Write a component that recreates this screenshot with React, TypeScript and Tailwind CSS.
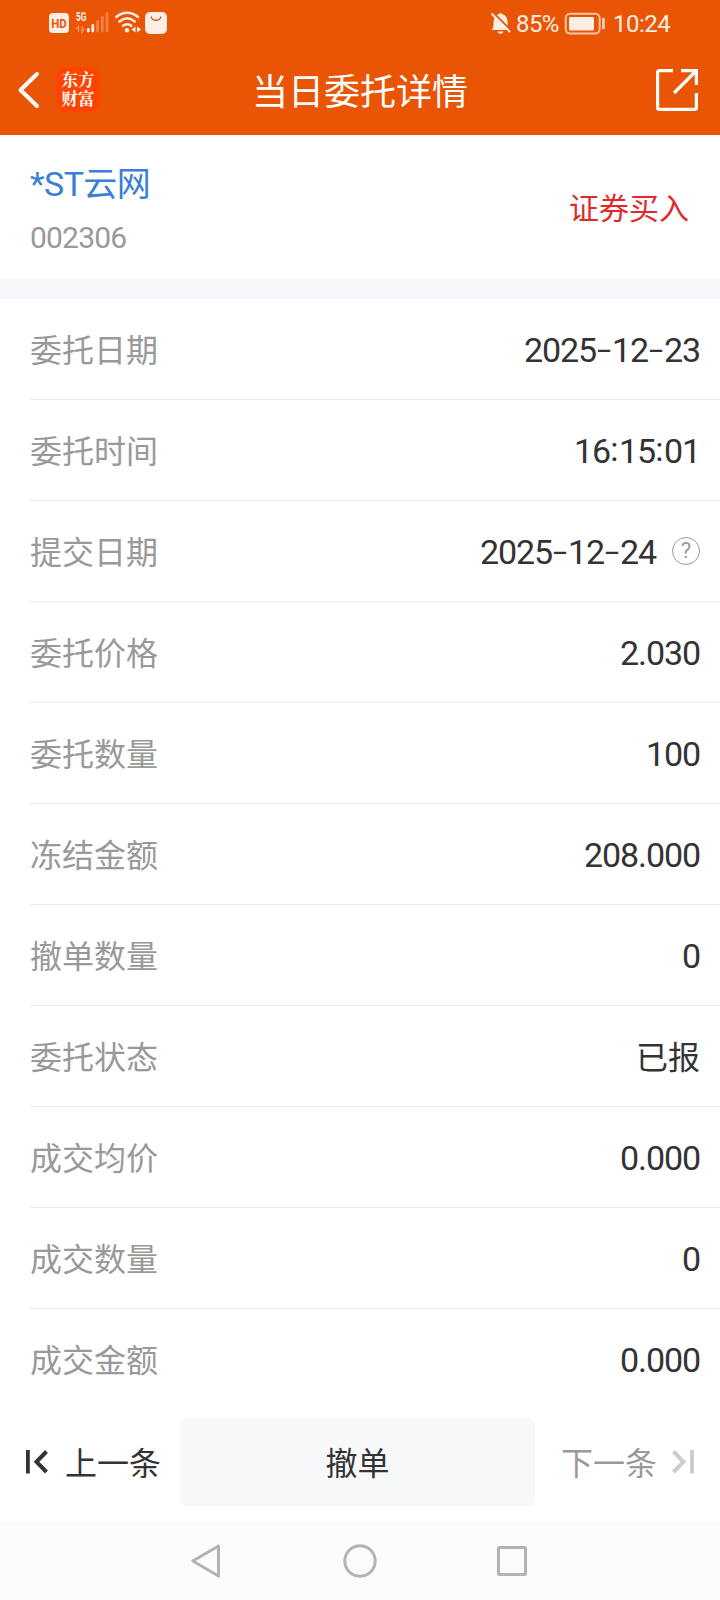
import React from "react";

const rows: { label: string; value: string; help?: boolean }[] = [
  { label: "委托日期", value: "2025-12-23" },
  { label: "委托时间", value: "16:15:01" },
  { label: "提交日期", value: "2025-12-24", help: true },
  { label: "委托价格", value: "2.030" },
  { label: "委托数量", value: "100" },
  { label: "冻结金额", value: "208.000" },
  { label: "撤单数量", value: "0" },
  { label: "委托状态", value: "已报" },
  { label: "成交均价", value: "0.000" },
  { label: "成交数量", value: "0" },
  { label: "成交金额", value: "0.000" },
];

function StatusBar() {
  return (
    <div className="flex h-[46px] items-center text-[#ffeee4]">
      <svg className="ml-[49px] h-[46px] w-[120px]" viewBox="49 0 120 46" fill="none">
        <rect x="49" y="13" width="20" height="20" rx="4" fill="#ffeee4" />
        <text x="59" y="28" textAnchor="middle" fontSize="13.5" fontWeight="700" fontFamily="Roboto, sans-serif" textLength="15.5" lengthAdjust="spacingAndGlyphs" fill="#e95504">HD</text>
        <text x="76" y="20.5" fontSize="12" fontWeight="700" fontFamily="Roboto, sans-serif" textLength="10.5" lengthAdjust="spacingAndGlyphs" fill="#ffeee4">5G</text>
        <g stroke="#f58d55" strokeWidth="1.5">
          <path d="M78.5 32V26.5L76 29M82 26v6l2.5-3.5" />
        </g>
        <g strokeWidth="2.8" strokeLinecap="round">
          <path d="M88.3 29.5V31M92.8 25.5V31" stroke="#ffeee4" />
          <path d="M97.6 21.5V31M102.3 17.5V31M107 13.5V31" stroke="#f4814a" />
        </g>
        <g stroke="#ffeee4" strokeWidth="2.5" strokeLinecap="round">
          <path d="M116.3 17C123 11.3 131.5 11.3 138 17M119.5 21.5C124.5 17.3 130 17.3 134.8 21.5M123 25.8C125.8 23.7 128.7 23.7 131.3 25.8" />
        </g>
        <circle cx="127" cy="30.2" r="2.2" fill="#ffeee4" />
        <path d="M135.5 26.5v6l-4-3zM137 26.5v6l4-3z" fill="#ffeee4" />
        <rect x="145" y="12" width="22" height="22" rx="5" fill="#ffeee4" />
        <path d="M151.200 16.500C152 21.500 160 21.500 160.800 16.500" stroke="#b94c12" strokeWidth="1.300" />
      </svg>
      <svg className="ml-[320px] h-[46px] w-[24px]" viewBox="489 0 24 46" fill="none">
        <path d="M491.500 30C494 28 493.300 25 493.600 21.500C494 17 497 14.500 499.200 14C499.500 12.500 501.500 12.500 501.800 14C506 15 507.600 18.500 507.600 22.500C507.600 26 507.800 28 509.500 30ZM497.500 31.500H503.500C502.500 34.500 498.500 34.500 497.500 31.500Z" fill="#ffeee4" />
        <path d="M492.500 12L511.500 31" stroke="#e95504" strokeWidth="2" />
        <path d="M491.500 13.500L510 32" stroke="#ffeee4" strokeWidth="2" />
      </svg>
      <span className="ml-[3px] w-[48px] whitespace-nowrap pt-px font-[Roboto,sans-serif] text-[24px] leading-[30px] tracking-[-0.6px]">85%</span>
      <svg className="h-[46px] w-[44px]" viewBox="564 0 44 46" fill="none">
        <rect x="565.700" y="13.700" width="34" height="19.800" rx="4.500" stroke="#ffc7a5" strokeWidth="2" />
        <rect x="569" y="17" width="25" height="13.500" rx="1.500" fill="#ffeee4" />
        <path d="M603.500 19V28" stroke="#ffd8c0" strokeWidth="2.600" strokeLinecap="round" />
      </svg>
      <span className="ml-[5px] whitespace-nowrap pt-px font-[Roboto,sans-serif] text-[24px] leading-[30px] tracking-[-0.5px]">10:24</span>
    </div>
  );
}

function TitleBar() {
  return (
    <div className="grid h-[87px] grid-cols-[120px_1fr_120px] items-center text-white">
      <div className="flex items-center pl-[16px]">
        <svg className="h-[40px] w-[26px]" viewBox="16 70 26 40" fill="none">
          <path d="M37 74L20.500 90L37 106" stroke="#fff" strokeWidth="4" strokeLinecap="round" strokeLinejoin="round" />
        </svg>
        <div className="ml-[14px] flex h-[45px] w-[44px] items-center justify-center rounded-[9px] bg-[#ff4400] pb-[2px] font-['Noto_Serif_CJK_SC','Noto_Sans_CJK_SC',sans-serif] text-[16.500px] font-bold leading-[19px]">
          <span>东方<br />财富</span>
        </div>
      </div>
      <h1 className="pb-[2px] text-center text-[36px] font-normal leading-[48px]">当日委托详情</h1>
      <svg className="ml-[54px] h-[46px] w-[46px]" viewBox="654 67 46 46" fill="none" stroke="#fff" strokeWidth="3.200">
        <path d="M673 70.600H659.500Q657.600 70.600 657.600 72.500V107.500Q657.600 109.400 659.500 109.400H694.500Q696.400 109.400 696.400 107.500V93M681 70.600H696.400V85M696 71L674 93" />
      </svg>
    </div>
  );
}

function Value({ text }: { text: string }) {
  return (
    <span className="flex whitespace-pre pt-[2px] font-[Roboto,sans-serif] text-[34px] leading-[48px] tracking-[-1.100px] text-[#333]">
      {text.split(/([-:])/).map((part, i) =>
        part === "-" ? (
          <span key={i} className="inline-block w-[16px] origin-center scale-x-[1.500] scale-y-[0.85] text-center tracking-normal">
            -
          </span>
        ) : part === ":" ? (
          <span key={i} className="inline-block w-[9px] -translate-y-[2px] text-center tracking-normal">:</span>
        ) : (
          <span key={i}>{part}</span>
        )
      )}
    </span>
  );
}

export default function App() {
  return (
    <div className="flex h-[1600px] w-[720px] flex-col overflow-hidden bg-white font-['Noto_Sans_CJK_SC',sans-serif]">
      <header className="h-[135px] shrink-0 bg-[#e95504]">
        <StatusBar />
        <TitleBar />
      </header>

      <section className="flex h-[144px] shrink-0 items-center justify-between pl-[30px] pr-[31px]">
        <div className="flex flex-col pt-[5px]">
          <span className="font-[Roboto,'Noto_Sans_CJK_SC',sans-serif] text-[34px] leading-[50px] tracking-[-0.600px] text-[#3a7fd5]">*ST云网</span>
          <span className="mt-[7px] font-[Roboto,sans-serif] text-[30px] leading-[44px] tracking-[-0.800px] text-[#999]">002306</span>
        </div>
        <span className="pb-[2px] text-[30px] leading-[44px] text-[#e02a2a]">证券买入</span>
      </section>
      <div className="h-[20px] shrink-0 bg-[#f6f7fa]" />

      <main className="flex shrink-0 flex-col">
        {rows.map((r, i) => (
          <div key={r.label} className="h-[101px] pl-[30px]">
            <div className={"flex h-[101px] items-center justify-between border-b pr-[20px] " + (i < rows.length - 1 ? "border-[#ebebeb]" : "border-transparent")}>
              <span className="pb-[2px] text-[32px] leading-[48px] text-[#999]">{r.label}</span>
              <div className="flex items-center">
                {r.value === "已报" ? <span className="pb-[2px] text-[32px] leading-[48px] text-[#333]">{r.value}</span> : <Value text={r.value} />}
                {r.help && (
                  <span className="ml-[16px] flex size-[28px] items-center justify-center rounded-full border-[1.500px] border-[#999] font-[Roboto,sans-serif] text-[22px] leading-none text-[#999]">?</span>
                )}
              </div>
            </div>
          </div>
        ))}
      </main>

      <div className="flex h-[112px] shrink-0 pt-[8px]">
        <div className="flex h-[88px] w-[180px] items-center pl-[24px]">
          <svg className="h-[28px] w-[26px]" viewBox="24 1448 26 28" fill="none" stroke="#333">
            <path d="M27.900 1450V1473.500" strokeWidth="3.800" />
            <path d="M46.500 1451.500L36.500 1461.800L46.500 1472" strokeWidth="4" />
          </svg>
          <span className="ml-[15px] pb-[2px] text-[32px] leading-[48px] text-[#333]">上一条</span>
        </div>
        <button className="flex h-[88px] w-[355px] items-center justify-center rounded-[8px] bg-[#f7f8fa] pb-[2px] text-[32px] leading-[48px] text-[#333]">撤单</button>
        <div className="flex h-[88px] items-center pl-[26px]">
          <span className="pb-[2px] text-[32px] leading-[48px] text-[#999]">下一条</span>
          <svg className="ml-[14px] h-[28px] w-[26px]" viewBox="671 1448 26 28" fill="none" stroke="#ccc">
            <path d="M673.500 1451.500L683.500 1461.800L673.500 1472" strokeWidth="4" />
            <path d="M692 1450V1473.500" strokeWidth="3.800" />
          </svg>
        </div>
      </div>

      <nav className="flex h-[78px] shrink-0 bg-[#fcfcfc]">
        <svg className="h-[78px] w-[720px]" viewBox="0 1522 720 78" fill="none" stroke="#b3b3b3" strokeWidth="3" strokeLinejoin="round">
          <path d="M218.500 1546V1576L192.800 1561Z" />
          <circle cx="360" cy="1561" r="15.200" />
          <rect x="498.500" y="1547.500" width="27" height="27" rx="1" />
        </svg>
      </nav>
    </div>
  );
}
